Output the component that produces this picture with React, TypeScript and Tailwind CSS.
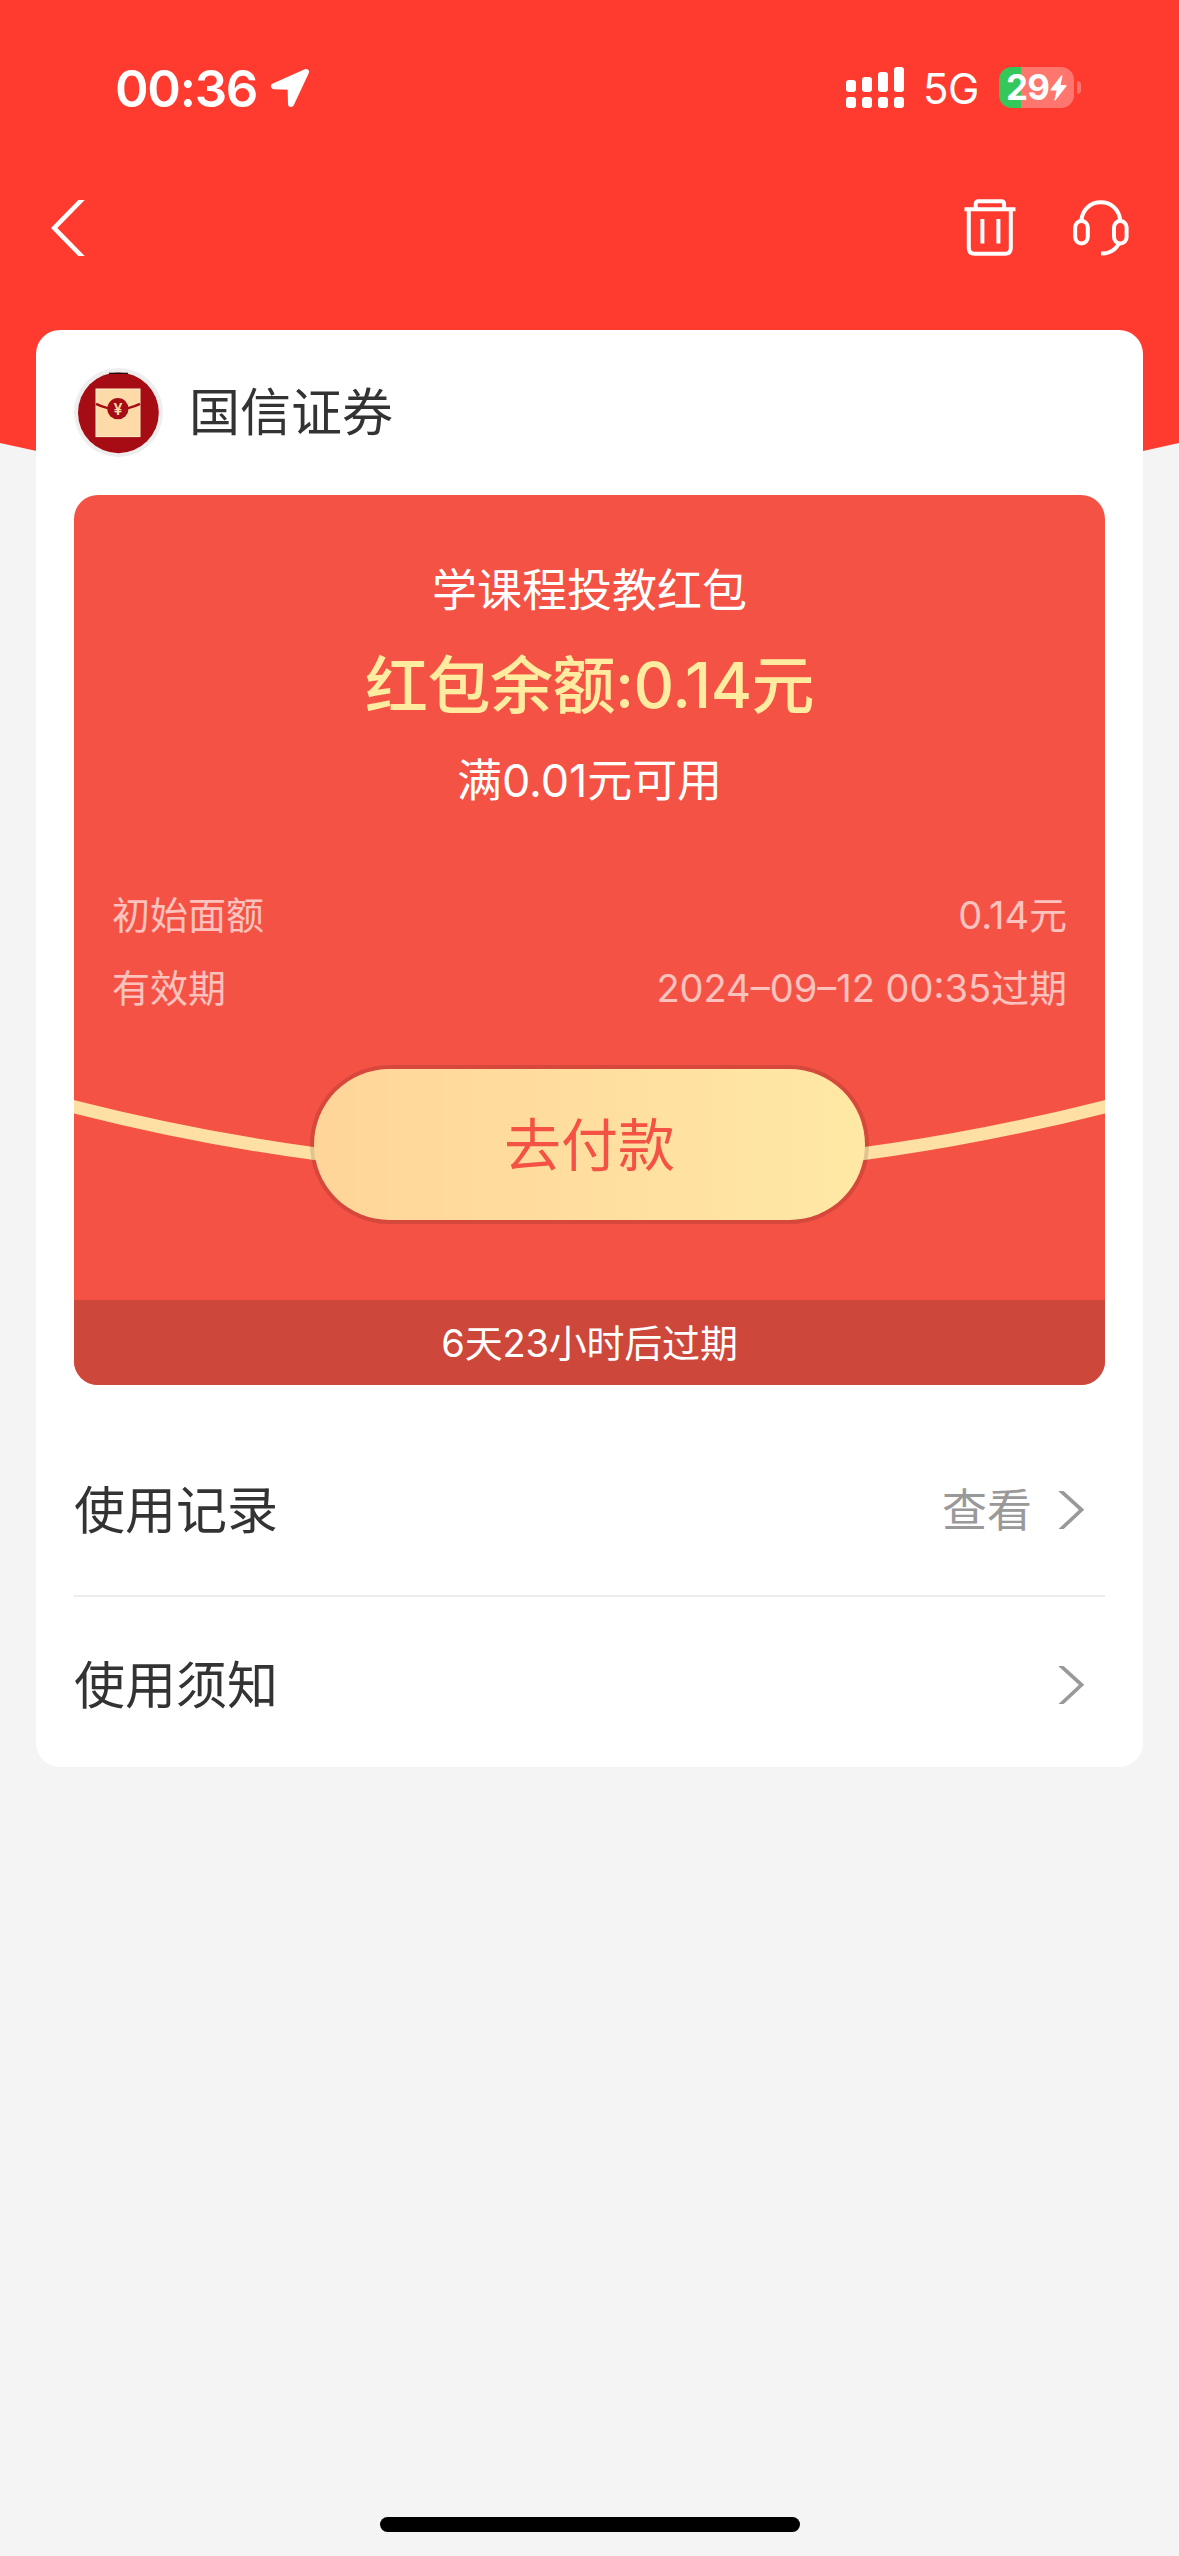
import type { ReactNode } from 'react';

interface DetailRowProps {
  label: string;
  value: string;
}

interface LinkRowProps {
  title: string;
  extra?: string;
  bordered?: boolean;
}

const signalBars = ['h-[12px]', 'h-[15px]', 'h-[20px]', 'h-[25px]'];

const details: DetailRowProps[] = [
  { label: '初始面额', value: '0.14元' },
  { label: '有效期', value: '2024–09–12 00:35过期' },
];

function LocationIcon() {
  return (
    <svg className="w-[40px] h-[40px]" viewBox="0 0 40 40" fill="#fff" stroke="#fff" strokeWidth="6" strokeLinejoin="round">
      <path d="M36 4 L4 18.2 L20.6 18.8 L21 36 Z" />
    </svg>
  );
}

function BoltIcon() {
  return (
    <svg className="w-[17px] h-[26px]" viewBox="0 0 17 26" fill="#fff">
      <path d="M11.5 0.3 Q12.6 -0.2 12.4 1.2 L10.6 10 L15.6 10 Q17 10.2 16.2 11.5 L5.5 25.2 Q4.2 26.2 4.5 24.5 L6.6 15.6 L1.2 15.6 Q0 15.2 0.9 14 Z" />
    </svg>
  );
}

function BackIcon() {
  return (
    <svg className="w-[34px] h-[56px]" viewBox="0 0 34 56" fill="none" stroke="#fff" strokeWidth="4.6">
      <path d="M32.5 -2 L3.2 28 L32.5 58" />
    </svg>
  );
}

function TrashIcon() {
  return (
    <svg className="w-[52px] h-[57px]" viewBox="0 0 52 57" fill="none" stroke="#fff" strokeWidth="4">
      <path d="M0.5 10.2 H51.5" />
      <path d="M11.7 9 V5 Q11.7 2.2 14.5 2.2 H37.3 Q40.1 2.2 40.1 5 V9" />
      <path d="M4.8 11 V49 Q4.8 54.7 10.5 54.7 H41.1 Q46.8 54.7 46.8 49 V11" />
      <path d="M18.4 20 V44.6 M34.4 20 V44.6" />
    </svg>
  );
}

function HeadsetIcon() {
  return (
    <svg className="w-[56px] h-[56px]" viewBox="0 0 56 56" fill="none" stroke="#fff" strokeWidth="4">
      <path d="M8.4 20 C9.5 9.5 17.5 2.2 27.8 2.2 S46.1 9.5 47.2 20" />
      <rect x="2.2" y="21" width="12.6" height="22.4" rx="6.3" />
      <rect x="41" y="21" width="12.6" height="22.4" rx="6.3" />
      <path d="M46.2 43 C42.8 50 36.5 53.6 28 53.6" />
    </svg>
  );
}

function ChevronIcon() {
  return (
    <svg className="w-[26px] h-[38px]" viewBox="0 0 26 38" fill="none" stroke="#999" strokeWidth="3.6">
      <path d="M1.6 -1.2 L23.6 18.8 L1.6 39.4" />
    </svg>
  );
}

function MerchantLogo() {
  return (
    <svg className="w-[89px] h-[89px]" viewBox="0 0 89 89">
      <circle cx="44.5" cy="44.5" r="44.5" fill="#eeeeee" />
      <circle cx="44.4" cy="44.8" r="40.4" fill="#a50c13" />
      <path d="M35 5.3 H54" stroke="#1a0a0a" strokeWidth="1.2" />
      <rect x="22" y="21" width="44" height="47.6" fill="#fddaa8" stroke="#fff0cf" strokeWidth="1" />
      <path d="M22 35.8 Q43.8 46.5 66 35.8" fill="none" stroke="#a50c13" strokeWidth="2.4" />
      <circle cx="43.9" cy="40.7" r="10.6" fill="#a50c13" />
      <text x="43.9" y="46.6" textAnchor="middle" fontSize="16" fontWeight="600" fill="#fddaa8">¥</text>
    </svg>
  );
}

function StatusBar() {
  return (
    <div className="h-[160px] pl-[115px] pr-[98px] pt-[67px] flex justify-between items-start">
      <div className="h-[42px] flex items-center">
        <span className="text-[51px] leading-[42px] font-semibold w-[146px] tracking-[-1.3px] pt-px">00:36</span>
        <span className="ml-[9px]"><LocationIcon /></span>
      </div>
      <div className="h-[41px] flex items-center">
        <div className="flex gap-[6px] items-end">
          {signalBars.map((bar) => (
            <div key={bar} className="flex flex-col gap-[5px]">
              <div className={`w-[10px] rounded-[3px] bg-white ${bar}`} />
              <div className="w-[10px] h-[11px] rounded-[3px] bg-white" />
            </div>
          ))}
        </div>
        <span className="ml-[19px] w-[60px] text-[42px] leading-[42px] tracking-[-0.6px] pt-[3px]">5G</span>
        <div className="ml-[16px] w-[75px] h-[41px] rounded-[13px] bg-[linear-gradient(90deg,#34c759_22px,#ff766e_22px)] flex items-center justify-center">
          <span className="text-[35px] leading-[41px] font-bold tracking-[-0.8px]">29</span>
          <span className="ml-px"><BoltIcon /></span>
        </div>
        <div className="ml-[3px] w-[4px] h-[13px] rounded-r-full bg-[#ff766e]" />
      </div>
    </div>
  );
}

function NavBar() {
  return (
    <nav className="h-[170px] pl-[51px] pr-[50px] pt-[39px] flex justify-between items-start">
      <span className="pt-px"><BackIcon /></span>
      <div className="flex gap-[57px]">
        <TrashIcon />
        <span className="pt-px"><HeadsetIcon /></span>
      </div>
    </nav>
  );
}

function DetailRow({ label, value }: DetailRowProps) {
  return (
    <div className="h-[73px] flex items-center justify-between text-[38px]">
      <span>{label}</span>
      <span>{value}</span>
    </div>
  );
}

function CouponLine({ className, children }: { className: string; children: ReactNode }) {
  return <p className={`text-center whitespace-nowrap ${className}`}>{children}</p>;
}

function Coupon() {
  return (
    <section className="relative h-[890px] mt-[38px] rounded-[24px] overflow-hidden bg-[#f35244] text-white pt-[66px] flex flex-col">
      <svg className="absolute left-0 top-[590px] w-[1031px] h-[100px]" viewBox="0 0 1031 100" fill="none">
        <path d="M-20 16.5 L0 21.7 Q515.5 152.9 1031 21.7 L1051 16.5" stroke="#ffe0a4" strokeWidth="13" />
      </svg>
      <CouponLine className="text-[45px] leading-[60px]">学课程投教红包</CouponLine>
      <CouponLine className="text-[63px] leading-[84px] mt-[22px] font-medium tracking-[-0.5px] text-[#ffeca0]">红包余额:0.14元</CouponLine>
      <CouponLine className="text-[45px] leading-[60px] mt-[24px] tracking-[-0.1px]">满0.01元可用</CouponLine>
      <div className="mt-[68px] px-[38px] text-white/65">
        {details.map((row) => (
          <DetailRow key={row.label} {...row} />
        ))}
      </div>
      <button className="relative self-center mt-[40px] w-[559px] h-[159px] rounded-full border-4 border-black/12 bg-clip-padding bg-linear-to-r from-[#ffd599] to-[#ffe8a5] text-[#f35244] text-[57px] pt-[2px]">
        去付款
      </button>
      <div className="mt-auto h-[85px] bg-[#cd483b] flex items-center justify-center text-[38px] tracking-[-0.2px] pt-[2px]">
        6天23小时后过期
      </div>
    </section>
  );
}

function LinkRow({ title, extra, bordered }: LinkRowProps) {
  return (
    <div className={`h-[174px] flex items-center pt-[2px] pr-[21px] ${bordered ? 'border-b-2 border-[#ececec]' : ''}`}>
      <span className="text-[51px] flex-1 text-[#333] pt-[2px]">{title}</span>
      {extra && <span className="text-[45px] text-[#999] mr-[26px] pt-[2px]">{extra}</span>}
      <ChevronIcon />
    </div>
  );
}

export default function App() {
  return (
    <div className="relative w-[1179px] h-[2556px] bg-[#f4f4f4] overflow-hidden flex flex-col font-['Inter','Noto_Sans_CJK_SC',sans-serif]">
      <svg className="absolute left-0 top-0 w-[1179px] h-[560px]" viewBox="0 0 1179 560">
        <path d="M0 0 H1179 V443 Q589.5 579 0 443 Z" fill="#ff3b30" />
      </svg>
      <header className="relative text-white">
        <StatusBar />
        <NavBar />
      </header>

      <main className="relative mx-[36px] h-[1437px] rounded-[24px] bg-white px-[38px] pt-[38px]">
        <div className="h-[89px] flex items-center gap-[26px]">
          <MerchantLogo />
          <h1 className="text-[51px] text-[#333] pt-[2px]">国信证券</h1>
        </div>
        <Coupon />
        <div className="mt-[38px]">
          <LinkRow title="使用记录" extra="查看" bordered />
          <LinkRow title="使用须知" />
        </div>
      </main>

      <div className="mt-auto mb-[24px] mx-auto w-[420px] h-[15px] rounded-full bg-black" />
    </div>
  );
}
